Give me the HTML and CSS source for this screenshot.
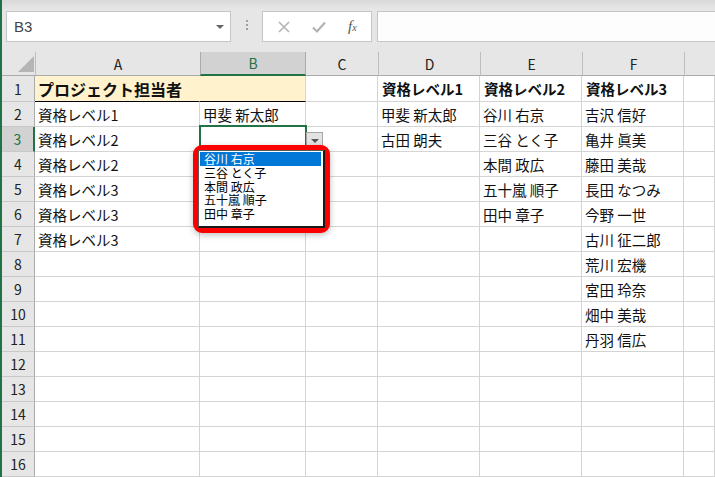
FILE: index.html
```html
<!DOCTYPE html>
<html lang="ja">
<head>
<meta charset="utf-8">
<link rel="stylesheet" href="styles.css">
</head>
<body>
<div class="app">
  <div class="fbar">
    <div class="namebox"><span>B3</span><span class="caret"></span></div>
    <div class="grip"><i></i><i></i><i></i></div>
    <div class="fbtns">
      <svg class="ico" width="14" height="14" viewBox="0 0 14 14"><path d="M2 2L12 12M12 2L2 12" stroke="#b3b3b3" stroke-width="1.6" fill="none"/></svg>
      <svg class="ico" width="16" height="14" viewBox="0 0 16 14"><path d="M2 7.5L6 11.5L14 2.5" stroke="#b3b3b3" stroke-width="2.2" fill="none"/></svg>
      <span class="fx">f<sub>x</sub></span>
    </div>
    <div class="finput"></div>
  </div>
  <div class="sheet">
    <div class="corner"><span class="tri"></span></div>
    <div class="ch">A</div><div class="ch sel">B</div><div class="ch">C</div><div class="ch">D</div><div class="ch">E</div><div class="ch">F</div><div class="ch"></div>

    <div class="rh">1</div><div class="c title span">プロジェクト担当者</div><div class="c title"></div><div class="c"></div><div class="c b">資格レベル1</div><div class="c b">資格レベル2</div><div class="c b">資格レベル3</div><div class="c"></div>

    <div class="rh">2</div><div class="c">資格レベル1</div><div class="c">甲斐 新太郎</div><div class="c"></div><div class="c">甲斐 新太郎</div><div class="c">谷川 右京</div><div class="c">吉沢 信好</div><div class="c"></div>

    <div class="rh rsel">3</div><div class="c">資格レベル2</div>
    <div class="c active">
      <span class="ddbtn"><span class="ddtri"></span></span>
      <div class="callout">
        <ul class="list">
          <li class="hl">谷川 右京</li>
          <li>三谷 とく子</li>
          <li>本間 政広</li>
          <li>五十嵐 順子</li>
          <li>田中 章子</li>
        </ul>
      </div>
    </div>
    <div class="c"></div><div class="c">古田 朗夫</div><div class="c">三谷 とく子</div><div class="c">亀井 眞美</div><div class="c"></div>

    <div class="rh">4</div><div class="c">資格レベル2</div><div class="c"></div><div class="c"></div><div class="c"></div><div class="c">本間 政広</div><div class="c">藤田 美哉</div><div class="c"></div>

    <div class="rh">5</div><div class="c">資格レベル3</div><div class="c"></div><div class="c"></div><div class="c"></div><div class="c">五十嵐 順子</div><div class="c">長田 なつみ</div><div class="c"></div>

    <div class="rh">6</div><div class="c">資格レベル3</div><div class="c"></div><div class="c"></div><div class="c"></div><div class="c">田中 章子</div><div class="c">今野 一世</div><div class="c"></div>

    <div class="rh">7</div><div class="c">資格レベル3</div><div class="c"></div><div class="c"></div><div class="c"></div><div class="c"></div><div class="c">古川 征二郎</div><div class="c"></div>

    <div class="rh">8</div><div class="c"></div><div class="c"></div><div class="c"></div><div class="c"></div><div class="c"></div><div class="c">荒川 宏機</div><div class="c"></div>

    <div class="rh">9</div><div class="c"></div><div class="c"></div><div class="c"></div><div class="c"></div><div class="c"></div><div class="c">宮田 玲奈</div><div class="c"></div>

    <div class="rh">10</div><div class="c"></div><div class="c"></div><div class="c"></div><div class="c"></div><div class="c"></div><div class="c">畑中 美哉</div><div class="c"></div>

    <div class="rh">11</div><div class="c"></div><div class="c"></div><div class="c"></div><div class="c"></div><div class="c"></div><div class="c">丹羽 信広</div><div class="c"></div>

    <div class="rh">12</div><div class="c"></div><div class="c"></div><div class="c"></div><div class="c"></div><div class="c"></div><div class="c"></div><div class="c"></div>

    <div class="rh">13</div><div class="c"></div><div class="c"></div><div class="c"></div><div class="c"></div><div class="c"></div><div class="c"></div><div class="c"></div>

    <div class="rh">14</div><div class="c"></div><div class="c"></div><div class="c"></div><div class="c"></div><div class="c"></div><div class="c"></div><div class="c"></div>

    <div class="rh">15</div><div class="c"></div><div class="c"></div><div class="c"></div><div class="c"></div><div class="c"></div><div class="c"></div><div class="c"></div>

    <div class="rh">16</div><div class="c"></div><div class="c"></div><div class="c"></div><div class="c"></div><div class="c"></div><div class="c"></div><div class="c"></div>
  </div>
</div>
</body>
</html>
```

FILE: styles.css
```css
html, body {
  margin: 0;
  padding: 0;
  height: 100%;
}
body {
  background: #e6e6e6;
  font-family: "Noto Sans CJK JP", "Noto Sans", sans-serif;
  color: #222;
  overflow: hidden;
}
.app {
  border-left: 2px solid #217346;
  height: 477px;
  box-sizing: border-box;
  display: flex;
  flex-direction: column;
}

/* formula bar */
.fbar {
  height: 52px;
  flex: none;
  box-sizing: border-box;
  display: flex;
  align-items: flex-start;
  padding: 11px 0 0 4px;
  background: linear-gradient(#d9d9d9, #e6e6e6 9px);
}
.namebox {
  width: 225px;
  height: 31px;
  box-sizing: border-box;
  background: #fff;
  border: 1px solid #c6c6c6;
  display: flex;
  align-items: center;
  justify-content: space-between;
  padding: 0 6px 0 7px;
  font-family: "Liberation Sans", sans-serif;
  font-size: 15px;
  color: #444;
}
.caret {
  width: 0;
  height: 0;
  border-left: 4px solid transparent;
  border-right: 4px solid transparent;
  border-top: 4px solid #666;
}
.grip {
  width: 31px;
  display: flex;
  flex-direction: column;
  align-items: center;
  gap: 2px;
  padding-top: 9px;
}
.grip i {
  display: block;
  width: 2px;
  height: 2px;
  background: #a0a0a0;
}
.fbtns {
  width: 110px;
  height: 31px;
  box-sizing: border-box;
  background: #fff;
  border: 1px solid #c6c6c6;
  display: flex;
  align-items: center;
  padding: 0 0 0 14px;
  gap: 20px;
}
.fx {
  font-family: "Liberation Serif", serif;
  font-style: italic;
  font-size: 15px;
  color: #555;
  margin-left: 1px;
}
.fx sub {
  font-size: 10px;
  vertical-align: 0;
}
.finput {
  flex: 1;
  margin-left: 5px;
  height: 31px;
  box-sizing: border-box;
  background: #fdfdfd;
  border: 1px solid #c6c6c6;
  border-right: none;
}

/* sheet grid */
.sheet {
  flex: 1;
  display: grid;
  grid-template-columns: 33px 165px 106px 72px 102px 102px 102px 1fr;
  grid-template-rows: 24px 26px repeat(15, 25px);
  background: #fff;
}
.corner {
  background: #e6e6e6;
  border-bottom: 1px solid #ababab;
  position: relative;
}
.tri {
  position: absolute;
  right: 1px;
  bottom: 3px;
  width: 0;
  height: 0;
  border-left: 16px solid transparent;
  border-bottom: 16px solid #b5b5b5;
}
.ch {
  background: #e6e6e6;
  border-left: 1px solid #bdbdbd;
  border-bottom: 1px solid #ababab;
  display: flex;
  align-items: center;
  justify-content: center;
  font-size: 14px;
  color: #222;
  box-sizing: border-box;
}
.ch.sel {
  background: #d2d2d2;
  border-left-color: #ababab;
  border-right: 1px solid #ababab;
  border-bottom: 2px solid #217346;
  color: #217346;
}
.ch.sel + .ch {
  border-left: none;
}
.rh {
  background: #e6e6e6;
  border-right: 1px solid #ababab;
  border-bottom: 1px solid #c8c8c8;
  display: flex;
  align-items: center;
  justify-content: center;
  font-size: 14px;
  color: #222;
  box-sizing: border-box;
}
.rh.rsel {
  background: #d2d2d2;
  border-right: 2px solid #217346;
  color: #217346;
}
.c {
  border-right: 1px solid #d4d4d4;
  border-bottom: 1px solid #d4d4d4;
  box-sizing: border-box;
  display: flex;
  align-items: center;
  padding: 0 0 0 3px;
  font-size: 14.5px;
  color: #111;
  white-space: nowrap;
  min-width: 0;
}
.c.b {
  font-weight: 700;
  padding-left: 4px;
}
.c.title {
  background: #fff2cc;
  border-bottom: 1px solid #000;
  font-weight: 700;
  font-size: 16px;
}
.c.span {
  border-right-color: #fff2cc;
  overflow: visible;
}

/* active cell + validation dropdown */
.c.active {
  position: relative;
  overflow: visible;
}
.c.active::after {
  content: "";
  position: absolute;
  top: -2px;
  left: -1px;
  right: -2px;
  bottom: -1px;
  border: 2px solid #217346;
  pointer-events: none;
}
.ddbtn {
  position: absolute;
  left: 106px;
  top: 5px;
  width: 17px;
  height: 17px;
  box-sizing: border-box;
  background: #e3e3e3;
  border: 1px solid #a6a6a6;
  display: flex;
  align-items: center;
  justify-content: center;
  z-index: 2;
}
.ddtri {
  width: 0;
  height: 0;
  border-left: 4px solid transparent;
  border-right: 4px solid transparent;
  border-top: 4px solid #555;
  margin-top: 1px;
}
.callout {
  position: absolute;
  left: -7px;
  top: 18px;
  width: 137px;
  height: 88px;
  box-sizing: border-box;
  border: 5px solid #ff0000;
  border-radius: 9px;
  background: #fff;
  box-shadow: 0 2px 6px rgba(0, 0, 0, 0.25);
  z-index: 3;
  padding: 0;
}
.list {
  list-style: none;
  margin: 0;
  padding: 1px 0 0 1px;
  height: 78px;
  box-sizing: border-box;
  border-left: 1px solid #5a5a5a;
  border-top: 1px solid #5a5a5a;
  border-right: 2px solid #1a1a1a;
  border-bottom: 2px solid #1a1a1a;
  background: #fff;
}
.list li {
  height: 13.5px;
  line-height: 13.5px;
  font-size: 12px;
  padding-left: 4px;
  margin-right: 2px;
  color: #000;
  white-space: nowrap;
}
.list li.hl {
  background: #0078d7;
  color: #fff;
  height: 14px;
  line-height: 14px;
}
```
